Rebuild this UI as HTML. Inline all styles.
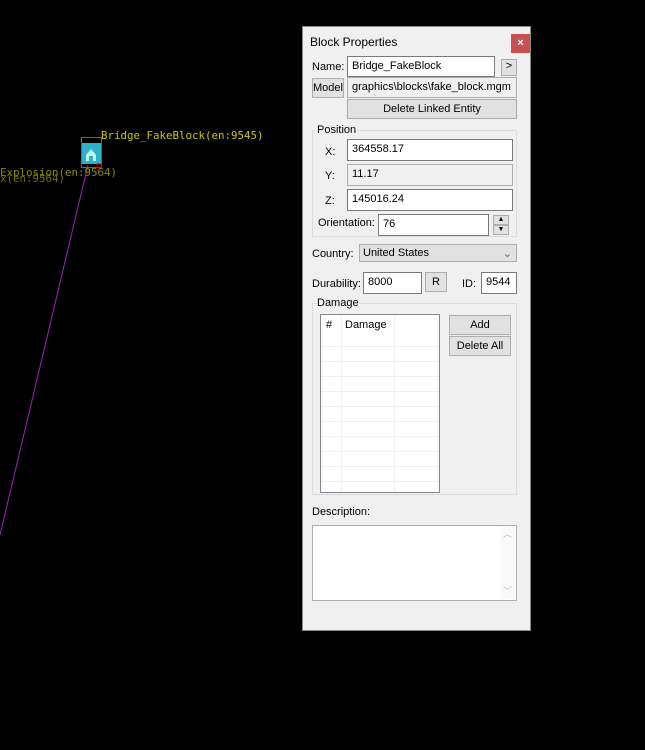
<!DOCTYPE html>
<html><head><style>
body{margin:0;width:645px;height:750px;background:#000;position:relative;overflow:hidden;font-family:"Liberation Sans",sans-serif;font-size:11px;color:#000}
.a{position:absolute}
.in{position:absolute;background:#fff;border:1px solid #7a7a7a;box-sizing:border-box;padding:3px 4px;font-size:11px}
.ro{background:#f0f0f0;border-color:#adadad}
.btn{position:absolute;background:#e1e1e1;border:1px solid #adadad;box-sizing:border-box;text-align:center;font-size:11px}
.grp{position:absolute;border:1px solid #dcdcdc;box-sizing:border-box}
.mono{font-family:"DejaVu Sans Mono",monospace;font-size:10.8px;color:#c8c800}
</style></head><body>
<svg class="a" style="left:0;top:0" width="300" height="600"><line x1="88" y1="165" x2="0" y2="535" stroke="#a020c0" stroke-width="1"/>
<rect x="81.5" y="137.5" width="20" height="30" fill="none" stroke="#0a0" /><rect x="82" y="143" width="19" height="21" fill="#2fb0c8"/><path d="M86 155 L91 149 L96 155 L96 161 L86 161Z" fill="#bfe" /><rect x="89" y="156" width="4" height="5" fill="#2fb0c8"/><rect x="97" y="164" width="4" height="4" fill="none" stroke="#c00"/></svg>
<div class="a mono" style="left:101px;top:129px">Bridge_FakeBlock(en:9545)</div>
<div class="a mono" style="left:0;top:166px;color:#888800">Explosion(en:9564)</div>
<div class="a mono" style="left:0;top:172px;color:#707000">x(en:9564)</div>

<div class="a" style="left:302px;top:26px;width:229px;height:605px;background:#f0f0f0;border:1px solid #888;box-sizing:border-box"></div>
<div class="a" style="left:310px;top:35px;font-size:12px">Block Properties</div>
<div class="a" style="left:511px;top:34px;width:19px;height:19px;background:#c75050;color:#fff;text-align:center;line-height:19px;font-weight:bold">×</div>
<div class="a" style="left:312px;top:61px">Name:</div>
<div class="in" style="left:347px;top:56px;width:148px;height:21px">Bridge_FakeBlock</div>
<div class="btn" style="left:501px;top:59px;width:16px;height:17px">&gt;</div>
<div class="btn" style="left:312px;top:78px;width:32px;height:20px;line-height:18px">Model</div>
<div class="in ro" style="left:347px;top:77px;width:170px;height:21px;color:#000">graphics\blocks\fake_block.mgm</div>
<div class="btn" style="left:347px;top:99px;width:170px;height:20px;line-height:18px">Delete Linked Entity</div>
<div class="grp" style="left:312px;top:130px;width:205px;height:107px"></div>
<div class="a" style="left:316px;top:124px;background:#f0f0f0;padding:0 1px">Position</div>
<div class="a" style="left:325px;top:146px">X:</div>
<div class="in" style="left:347px;top:139px;width:166px;height:22px">364558.17</div>
<div class="a" style="left:325px;top:170px">Y:</div>
<div class="in ro" style="left:347px;top:164px;width:166px;height:22px">11.17</div>
<div class="a" style="left:325px;top:195px">Z:</div>
<div class="in" style="left:347px;top:189px;width:166px;height:22px">145016.24</div>
<div class="a" style="left:318px;top:217px">Orientation:</div>
<div class="in" style="left:378px;top:214px;width:111px;height:22px">76</div>
<div class="btn" style="left:493px;top:215px;width:16px;height:10px;font-size:7px;line-height:8px">▲</div>
<div class="btn" style="left:493px;top:225px;width:16px;height:10px;font-size:7px;line-height:8px">▼</div>
<div class="a" style="left:312px;top:248px">Country:</div>
<div class="btn" style="left:359px;top:244px;width:158px;height:18px;text-align:left;padding:2px 3px">United States<span style="position:absolute;right:4px;color:#666">⌄</span></div>
<div class="a" style="left:312px;top:278px">Durability:</div>
<div class="in" style="left:363px;top:272px;width:59px;height:22px">8000</div>
<div class="btn" style="left:425px;top:272px;width:22px;height:20px;line-height:18px">R</div>
<div class="a" style="left:462px;top:278px">ID:</div>
<div class="in" style="left:481px;top:272px;width:36px;height:22px">9544</div>
<div class="grp" style="left:312px;top:303px;width:205px;height:192px"></div>
<div class="a" style="left:317px;top:297px;background:#f0f0f0">Damage</div>
<svg class="a" style="left:320px;top:314px" width="120" height="179">
<rect x="0.5" y="0.5" width="119" height="178" fill="#fff" stroke="#828790"/>
<g stroke="#f0f0f0"><line x1="21.5" y1="1" x2="21.5" y2="178"/><line x1="74.5" y1="1" x2="74.5" y2="178"/>
<line x1="1" y1="32.5" x2="119" y2="32.5"/><line x1="1" y1="47.5" x2="119" y2="47.5"/><line x1="1" y1="62.5" x2="119" y2="62.5"/><line x1="1" y1="77.5" x2="119" y2="77.5"/><line x1="1" y1="92.5" x2="119" y2="92.5"/><line x1="1" y1="107.5" x2="119" y2="107.5"/><line x1="1" y1="122.5" x2="119" y2="122.5"/><line x1="1" y1="137.5" x2="119" y2="137.5"/><line x1="1" y1="152.5" x2="119" y2="152.5"/><line x1="1" y1="167.5" x2="119" y2="167.5"/></g>
<text x="6" y="14" font-size="11" font-family="Liberation Sans">#</text><text x="25" y="14" font-size="11" font-family="Liberation Sans">Damage</text></svg>
<div class="btn" style="left:449px;top:315px;width:62px;height:20px;line-height:18px">Add</div>
<div class="btn" style="left:449px;top:336px;width:62px;height:20px;line-height:18px">Delete All</div>
<div class="a" style="left:312px;top:506px">Description:</div>
<div class="in" style="left:312px;top:525px;width:205px;height:76px;border-color:#adadad"></div>
<div class="a" style="left:500px;top:527px;width:15px;height:72px;background:#fafafa;color:#bbb;font-size:9px;text-align:center">︿<div style="position:absolute;bottom:2px;width:15px">﹀</div></div>
</body></html>
